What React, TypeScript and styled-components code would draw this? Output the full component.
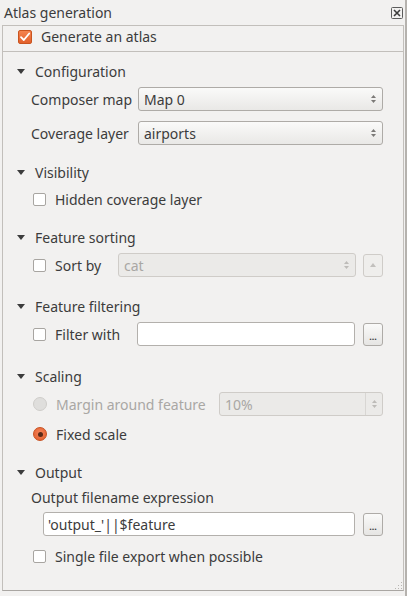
import React from "react";
import styled, { createGlobalStyle, css } from "styled-components";

const Global = createGlobalStyle`
  html, body { margin: 0; padding: 0; background: #f2f1f0; }
  body { font-family: "Noto Sans", "Open Sans", sans-serif; font-size: 14px; color: #3c3c3c; }
  * { box-sizing: border-box; }
`;

const Root = styled.div`
  width: 407px;
  height: 596px;
  background: #f2f1f0;
  border-right: 2px solid #b5b2ae;
  display: flex;
  flex-direction: column;
  overflow: hidden;
`;

const TitleBar = styled.div`
  height: 25px;
  flex: none;
  display: flex;
  align-items: center;
  justify-content: space-between;
  padding: 0 2px 0 4px;
  font-size: 14px;
  color: #3c3c3c;
`;

const Frame = styled.div`
  margin: 0 1px 0 2px;
  height: 566px;
  border: 1px solid #c2bfbb;
  border-bottom-color: #a9a6a2;
  display: flex;
  flex-direction: column;
  position: relative;
`;

const AtlasRow = styled.div`
  height: 25px;
  flex: none;
  display: flex;
  align-items: center;
  padding: 0 0 4px 15px;
  gap: 9px;
`;

const Inner = styled.div`
  flex: 1;
  border-top: 1px solid #c2bfbb;
  padding: 9px 20px 0 14px;
  display: flex;
  flex-direction: column;
`;

const Section = styled.div<{ $top: number }>`
  display: flex;
  flex-direction: column;
  margin-top: ${(p) => p.$top}px;
`;

const Header = styled.div`
  height: 20px;
  display: flex;
  align-items: center;
  gap: 10px;
  color: #3c3c3c;
`;

const Triangle = styled.span`
  width: 0;
  height: 0;
  border-left: 4px solid transparent;
  border-right: 4px solid transparent;
  border-top: 5px solid #3c3c3c;
`;

const Row = styled.div<{ $h?: number; $mt?: number; $pl?: number }>`
  height: ${(p) => p.$h ?? 24}px;
  margin-top: ${(p) => p.$mt ?? 6}px;
  padding-left: ${(p) => p.$pl ?? 16}px;
  display: flex;
  align-items: center;
`;

const Label = styled.span<{ $w?: number; $disabled?: boolean }>`
  ${(p) => p.$w && css`width: ${p.$w}px; flex: none;`}
  color: ${(p) => (p.$disabled ? "#a9a7a4" : "#3c3c3c")};
  white-space: nowrap;
`;

const Combo = styled.div<{ $disabled?: boolean; $w?: number }>`
  flex: ${(p) => (p.$w ? "none" : "1")};
  ${(p) => p.$w && css`width: ${p.$w}px;`}
  height: 24px;
  border-radius: 3px;
  border: 1px solid ${(p) => (p.$disabled ? "#cfccc8" : "#aeaba7")};
  background: ${(p) =>
    p.$disabled ? "#ebeae8" : "linear-gradient(#fafaf9, #e9e8e6)"};
  color: ${(p) => (p.$disabled ? "#a9a7a4" : "#3c3c3c")};
  display: flex;
  align-items: center;
  padding: 0 0 0 5px;
`;

const ComboText = styled.span`
  flex: 1;
`;

const Arrows = styled.span<{ $divider?: boolean }>`
  width: 17px;
  align-self: stretch;
  display: flex;
  align-items: center;
  justify-content: center;
  ${(p) => p.$divider && css`border-left: 1px solid #d8d6d3;`}
`;

const Input = styled.div<{ $w: number }>`
  width: ${(p) => p.$w}px;
  flex: none;
  height: 24px;
  background: #fff;
  border: 1px solid #b3b0ac;
  border-radius: 3px;
  display: flex;
  align-items: center;
  padding-left: 4px;
  color: #3c3c3c;
`;

const SmallButton = styled.div<{ $disabled?: boolean }>`
  width: 20px;
  height: 23px;
  flex: none;
  margin-left: auto;
  border-radius: 3px;
  border: 1px solid ${(p) => (p.$disabled ? "#cfccc8" : "#aeaba7")};
  background: ${(p) => (p.$disabled ? "#efeeec" : "linear-gradient(#fafaf9, #e6e5e3)")};
  display: flex;
  align-items: center;
  justify-content: center;
  font-size: 9px;
  font-weight: bold;
  color: #3c3c3c;
  padding-top: 5px;
`;

const Box = styled.span<{ $checked?: boolean; $size?: number }>`
  width: ${(p) => p.$size ?? 13}px;
  height: ${(p) => p.$size ?? 13}px;
  flex: none;
  border-radius: 2px;
  display: flex;
  align-items: center;
  justify-content: center;
  ${(p) =>
    p.$checked
      ? css`
          background: linear-gradient(#f4834f, #e3602b);
          border: 1px solid #c9541f;
        `
      : css`
          background: #fff;
          border: 1px solid #a8a5a1;
        `}
`;

const CheckLabel = styled.label<{ $w?: number }>`
  display: flex;
  align-items: center;
  gap: 9px;
  white-space: nowrap;
  ${(p) => p.$w && css`width: ${p.$w}px; flex: none;`}
`;

const Radio = styled.span<{ $checked?: boolean }>`
  width: 14px;
  height: 14px;
  flex: none;
  border-radius: 50%;
  display: flex;
  align-items: center;
  justify-content: center;
  ${(p) =>
    p.$checked
      ? css`
          background: radial-gradient(circle at 50% 40%, #f5845a, #df5a28);
          border: 1px solid #c85020;
          &::after {
            content: "";
            width: 5px;
            height: 5px;
            border-radius: 50%;
            background: #5a2a18;
          }
        `
      : css`
          background: #dfdedc;
          border: 1px solid #cfcdca;
        `}
`;

const Grip = styled.svg`
  position: absolute;
  right: 0;
  bottom: 0;
`;

const UpDown = ({ color = "#7b7977" }: { color?: string }) => (
  <svg width="7" height="12" viewBox="0 0 7 12">
    <path d="M3.5 2 L6 5 L1 5 Z" fill={color} />
    <path d="M3.5 10 L6 7 L1 7 Z" fill={color} />
  </svg>
);

const Check = () => (
  <svg width="12" height="12" viewBox="0 0 12 12">
    <path d="M2 6.2 L4.8 9 L10.2 2.5" fill="none" stroke="#fff" strokeWidth="1.8" strokeLinecap="round" strokeLinejoin="round" />
  </svg>
);

const CloseIcon = () => (
  <svg width="12" height="12" viewBox="0 0 12 12">
    <rect x="0.5" y="0.5" width="11" height="11" fill="none" stroke="#5c5c5c" rx="1" />
    <path d="M3 3 L9 9 M9 3 L3 9" stroke="#3c3c3c" strokeWidth="1.6" />
  </svg>
);

export default function App() {
  return (
    <>
      <Global />
      <Root>
        <TitleBar>
          <span>Atlas generation</span>
          <CloseIcon />
        </TitleBar>
        <Frame>
          <AtlasRow>
            <Box $checked $size={14}>
              <Check />
            </Box>
            <Label>Generate an atlas</Label>
          </AtlasRow>
          <Inner>
            <Section $top={0}>
              <Header>
                <Triangle />
                <span>Configuration</span>
              </Header>
              <Row $pl={14}>
                <Label $w={107}>Composer map</Label>
                <Combo>
                  <ComboText>Map 0</ComboText>
                  <Arrows>
                    <UpDown />
                  </Arrows>
                </Combo>
              </Row>
              <Row $pl={14} $mt={10}>
                <Label $w={107}>Coverage layer</Label>
                <Combo>
                  <ComboText>airports</ComboText>
                  <Arrows>
                    <UpDown />
                  </Arrows>
                </Combo>
              </Row>
            </Section>

            <Section $top={17}>
              <Header>
                <Triangle />
                <span>Visibility</span>
              </Header>
              <Row $h={22}>
                <CheckLabel>
                  <Box />
                  <Label>Hidden coverage layer</Label>
                </CheckLabel>
              </Row>
            </Section>

            <Section $top={17}>
              <Header>
                <Triangle />
                <span>Feature sorting</span>
              </Header>
              <Row>
                <CheckLabel $w={85}>
                  <Box />
                  <Label>Sort by</Label>
                </CheckLabel>
                <Combo $disabled $w={238}>
                  <ComboText>cat</ComboText>
                  <Arrows>
                    <UpDown color="#bdbbb8" />
                  </Arrows>
                </Combo>
                <SmallButton $disabled>
                  <svg width="8" height="6" viewBox="0 0 8 6" style={{ marginTop: -5 }}>
                    <path d="M4 1 L7 5 L1 5 Z" fill="#c2c0bd" />
                  </svg>
                </SmallButton>
              </Row>
            </Section>

            <Section $top={19}>
              <Header>
                <Triangle />
                <span>Feature filtering</span>
              </Header>
              <Row>
                <CheckLabel $w={104}>
                  <Box />
                  <Label>Filter with</Label>
                </CheckLabel>
                <Input $w={218} />
                <SmallButton>...</SmallButton>
              </Row>
            </Section>

            <Section $top={20}>
              <Header>
                <Triangle />
                <span>Scaling</span>
              </Header>
              <Row>
                <CheckLabel $w={186}>
                  <Radio />
                  <Label $disabled>Margin around feature</Label>
                </CheckLabel>
                <Combo $disabled>
                  <ComboText>10%</ComboText>
                  <Arrows $divider>
                    <UpDown color="#bdbbb8" />
                  </Arrows>
                </Combo>
              </Row>
              <Row $h={20} $mt={8}>
                <CheckLabel>
                  <Radio $checked />
                  <Label>Fixed scale</Label>
                </CheckLabel>
              </Row>
            </Section>

            <Section $top={18}>
              <Header>
                <Triangle />
                <span>Output</span>
              </Header>
              <Row $h={20} $mt={5} $pl={14}>
                <Label>Output filename expression</Label>
              </Row>
              <Row $h={24} $mt={5} $pl={26}>
                <Input $w={312}>'output_'||$feature</Input>
                <SmallButton>...</SmallButton>
              </Row>
              <Row $h={22} $mt={9}>
                <CheckLabel>
                  <Box />
                  <Label>Single file export when possible</Label>
                </CheckLabel>
              </Row>
            </Section>
          </Inner>
          <Grip width="10" height="10" viewBox="0 0 10 10">
            {[
              [8, 2],
              [5, 5],
              [8, 5],
              [2, 8],
              [5, 8],
              [8, 8],
            ].map(([x, y], i) => (
              <rect key={i} x={x} y={y} width="1" height="1" fill="#b8b5b1" />
            ))}
          </Grip>
        </Frame>
      </Root>
    </>
  );
}
